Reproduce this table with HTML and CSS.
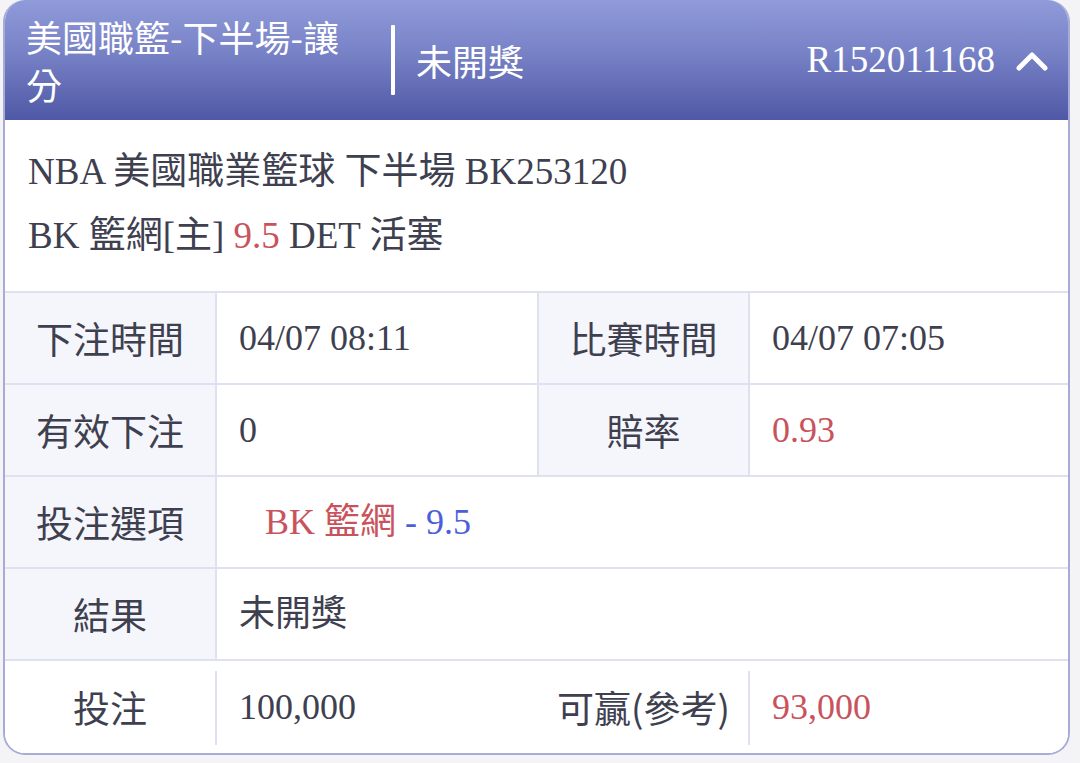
FILE: index.html
```html
<!DOCTYPE html>
<html lang="zh-Hant">
<head>
<meta charset="utf-8">
<title>注單</title>
<link rel="stylesheet" href="styles.css">
</head>
<body>
<div class="card">
  <div class="head">
    <div class="title">美國職籃-下半場-讓分</div>
    <div class="divider"></div>
    <div class="status">未開獎</div>
    <div class="spacer"></div>
    <div class="order">R152011168</div>
    <svg class="chev" width="32" height="20" viewBox="0 0 32 20"><path d="M3 17 L16 4 L29 17" fill="none" stroke="#fff" stroke-width="5" stroke-linecap="round" stroke-linejoin="round"/></svg>
  </div>
  <div class="info">
    <div class="line">NBA 美國職業籃球 下半場 BK253120</div>
    <div class="line">BK 籃網[主] <span class="red">9.5</span> DET 活塞</div>
  </div>
  <div class="grid">
    <div class="lab">下注時間</div>
    <div class="val">04/07 08:11</div>
    <div class="lab">比賽時間</div>
    <div class="val">04/07 07:05</div>

    <div class="lab">有效下注</div>
    <div class="val">0</div>
    <div class="lab">賠率</div>
    <div class="val red">0.93</div>

    <div class="lab">投注選項</div>
    <div class="val wide"><span class="pick"><span class="red">BK 籃網</span> <span class="blue">- 9.5</span></span></div>

    <div class="lab">結果</div>
    <div class="val wide">未開獎</div>
  </div>
  <div class="last">
    <div class="lab plain">投注</div>
    <div class="sep"></div>
    <div class="val">100,000</div>
    <div class="lab plain">可贏(參考)</div>
    <div class="sep"></div>
    <div class="val red">93,000</div>
  </div>
</div>
</body>
</html>
```

FILE: styles.css
```css
html, body {
  margin: 0;
  padding: 0;
  background: #f4f4f6;
}
body {
  width: 1080px;
  height: 763px;
  overflow: hidden;
}
.card {
  margin-left: 3px;
  width: 1063px;
  height: 753px;
  background: #fff;
  border: 2px solid #a7abd5;
  border-top: none;
  border-radius: 22px;
  overflow: hidden;
  display: flex;
  flex-direction: column;
  color: #3e404f;
}
.head {
  height: 120px;
  flex: none;
  display: flex;
  align-items: center;
  background: linear-gradient(to bottom, #909bda 0%, #7781c6 45%, #4f58a5 100%);
  color: #fff;
  font-family: "Noto Sans CJK TC", "Noto Sans", sans-serif;
  padding: 0 20px 0 21px;
}
.title {
  width: 332px;
  font-size: 36px;
  line-height: 48px;
  word-break: break-all;
}
.divider {
  width: 4px;
  height: 70px;
  background: #fff;
  margin-left: 33px;
  border-radius: 1px;
}
.status {
  margin-left: 21px;
  font-size: 36px;
  line-height: 48px;
}
.spacer { flex: 1; }
.order {
  font-family: "Liberation Serif", serif;
  font-size: 37px;
  line-height: 48px;
}
.chev {
  margin-left: 21px;
  margin-top: 2px;
}
.info {
  flex: none;
  padding: 20px 22px 23px 23px;
  font-family: "Liberation Serif", "Noto Sans CJK TC", serif;
  font-size: 37px;
  line-height: 64px;
}
.red { color: #c9535d; }
.blue { color: #4b5fd8; }
.grid {
  flex: none;
  display: grid;
  grid-template-columns: 210px 320px 209px 1fr;
  grid-auto-rows: 90px;
  gap: 2px;
  background: #dfe1f2;
  border-top: 2px solid #dfe1f2;
  border-bottom: 2px solid #dfe1f2;
}
.lab {
  background: #f5f6fb;
  display: flex;
  align-items: center;
  justify-content: center;
  font-family: "Noto Sans CJK TC", sans-serif;
  font-size: 37px;
  line-height: 48px;
  white-space: nowrap;
  color: #3e404f;
}
.val {
  background: #fff;
  display: flex;
  align-items: center;
  padding-left: 22px;
  font-family: "Liberation Serif", "Noto Sans CJK TC", serif;
  font-size: 36px;
  line-height: 48px;
  white-space: nowrap;
}
.val.red { color: #c9535d; }
.wide { grid-column: 2 / 5; }
.pick { margin-left: 26px; }
.last {
  flex: 1;
  display: grid;
  grid-template-columns: 210px 2px 322px 209px 2px 1fr;
}
.last .plain { background: #fff; }
.sep {
  background: #dfe1f2;
  margin: 10px 0 8px;
}
```
